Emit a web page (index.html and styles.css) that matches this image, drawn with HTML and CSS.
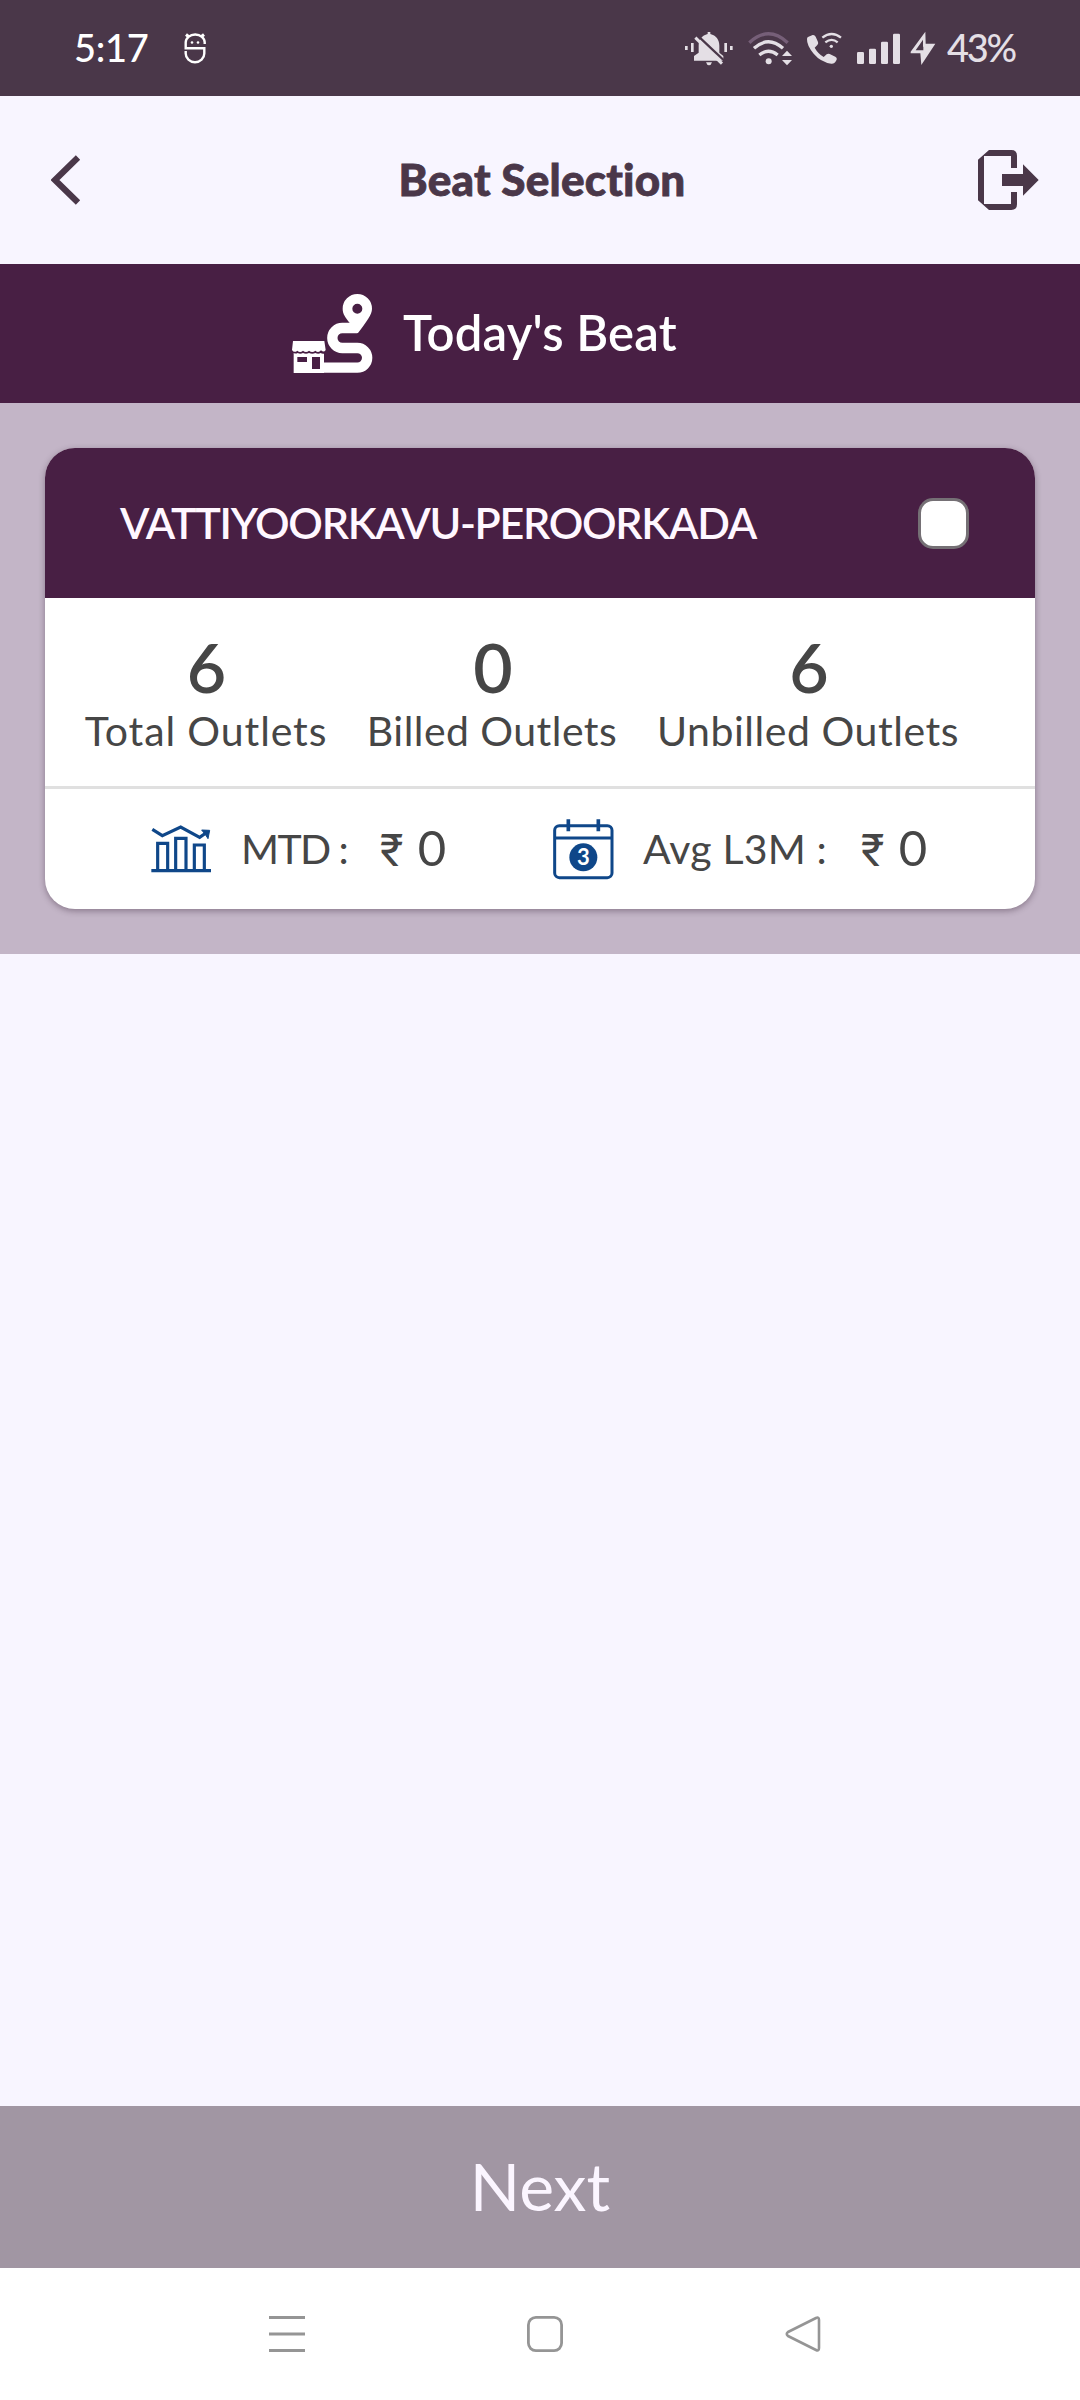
FILE: index.html
```html
<!DOCTYPE html>
<html lang="en">
<head>
<meta charset="utf-8">
<title>Beat Selection</title>
<link rel="stylesheet" href="styles.css">
</head>
<body>
<div class="screen">
  <div class="status">
    <span class="clock">5:17</span>
    <svg class="face" viewBox="0 0 22 32" width="22" height="32" fill="none" stroke="#fff" stroke-width="2.4">
      <path d="M20.7 12V10.500A9.500 8 0 0 0 1.700 10.500V16.200H20.300V21.500A9.300 8.800 0 0 1 1.700 21.500V19"/>
      <path d="M2 2.500L5 5M20 2.500L17 5" stroke-width="3"/>
      <circle cx="8" cy="10.500" r="1.300" fill="#fff" stroke="none"/><circle cx="14" cy="10.500" r="1.300" fill="#fff" stroke="none"/>
    </svg>
    <div class="tray">
      <svg class="bell" viewBox="75 90 150 105" width="50" height="35" fill="#e4dfe5">
        <path d="M78 135h8v12h-8zM96 126h8v27h-8zM196 126h8v27h-8zM213 135h8v12h-8z"/>
        <path d="M146 99V93h8v6C171 103 181 116 181 134v21l12 10v14H105v-14l14-10v-21C119 116 129 103 146 99zM141 184h18q-3 9-9 9t-9-9z"/>
        <path d="M112 100L200 183" stroke="#4a3749" stroke-width="7"/>
        <path d="M102 104L118 119" stroke="#4a3749" stroke-width="18"/>
        <path d="M109 110L189 188" stroke="#e4dfe5" stroke-width="9"/>
      </svg>
      <svg class="wifi" viewBox="264 90 135 105" width="45" height="35" fill="none" stroke="#e4dfe5" stroke-width="10">
        <path d="M268 125Q325 72 383 125" stroke="#765f78"/>
        <path d="M282 142Q325 103 369 142M298 162Q325 140 353 162"/>
        <circle cx="326" cy="181" r="9" fill="#e4dfe5" stroke="none"/>
        <path d="M366 165L381 149L396 165zM366 177L381 193L396 177z" fill="#e4dfe5" stroke="none"/>
      </svg>
      <svg class="call" viewBox="438 90 108 105" width="36" height="35" fill="none" stroke="#e4dfe5" stroke-width="7">
        <path d="M444 108L458 102Q464 101 467 107L474 123Q476 128 472 132L464 140Q474 158 491 168L500 160Q504 157 509 159L526 167Q532 170 530 176L526 183Q522 189 514 188Q482 183 461 158Q440 133 441 114Q441 110 444 108z" fill="#e4dfe5" stroke="none"/>
        <path d="M487 110Q515 88 543 110M496 124Q515 109 533 124"/>
        <circle cx="514" cy="136" r="5" fill="#e4dfe5" stroke="none"/>
      </svg>
      <svg class="signal" viewBox="588 90 135 105" width="45" height="35" fill="#e4dfe5">
        <rect x="591" y="153" width="21" height="36" rx="4"/><rect x="627" y="143" width="21" height="46" rx="4"/><rect x="663" y="122" width="21" height="67" rx="4"/><rect x="699" y="98" width="21" height="91" rx="4"/>
      </svg>
      <svg class="bolt" viewBox="750 90 78 105" width="26" height="35">
        <path fill="#e4dfe5" fill-rule="evenodd" d="M796 92L797 128H826L784 192L781 157H752V152zM789 116L767 148H790V137H789z"/>
      </svg>
      <span class="battery">43%</span>
    </div>
  </div>

  <header class="appbar">
    <svg class="back" viewBox="0 0 30 50" width="30" height="50"><path d="M27 2.500L4 25L27 47.500" fill="none" stroke="#4a3749" stroke-width="6.200"/></svg>
    <h1 class="title">Beat Selection</h1>
    <svg class="logout" viewBox="954 450 183 180" width="61" height="60">
      <path fill="#4a3749" fill-rule="evenodd" d="M987 450H1054Q1071 450 1071 467V504H1053V468H972V612H1053V576H1071V613Q1071 630 1054 630H987L954 601V479z"/>
      <path fill="#4a3749" d="M1026 522H1089V493L1136 540L1089 587V558H1026z"/>
    </svg>
  </header>

  <div class="banner">
    <svg class="route" viewBox="63 99 246 243" width="82" height="81">
      <path d="M155 323H262A29.500 29.500 0 0 0 262 264H217A30 30 0 0 1 217 204H262" fill="none" stroke="#fff" stroke-width="31"/>
      <path fill="#fff" fill-rule="evenodd" d="M262 102A44 44 0 0 1 306 146C306 164 290 184 264 219H240V190C226 172 218 162 218 146A44 44 0 0 1 262 102zM262 131A15 15 0 0 0 262 161A15 15 0 0 0 262 131z"/>
      <path fill="#fff" d="M69 243H163L167 270Q162 279 153 271Q145 280 136 272Q127 280 117 272Q108 280 99 272Q90 280 82 272Q72 280 66 270z"/>
      <path fill="#fff" fill-rule="evenodd" d="M71 279Q78 282 83 279Q91 284 99 279Q108 284 117 279Q127 284 136 279Q145 284 152 279Q156 282 162 281V339H71zM82 291V306H111V291zM126 291V327H150V291z"/>
    </svg>
    <span class="banner-text">Today's Beat</span>
  </div>

  <main class="list">
    <section class="card">
      <div class="card-head">
        <span class="beat-name">VATTIYOORKAVU-PEROORKADA</span>
        <span class="checkbox"></span>
      </div>
      <div class="stats">
        <div class="stat"><span class="num">6</span><span class="label l-total">Total Outlets</span></div>
        <div class="stat"><span class="num">0</span><span class="label l-billed">Billed Outlets</span></div>
        <div class="stat"><span class="num">6</span><span class="label l-unbilled">Unbilled Outlets</span></div>
      </div>
      <div class="sales">
        <svg class="chart" viewBox="63 75 180 144" width="60" height="48" fill="none" stroke="#0f4789" stroke-width="9.500">
          <path d="M64 212H243M83 211V130H113V211M137 211V115H168V211M193 211V135H223V211"/>
          <path d="M67 88L97 107L152 81L209 112L232 96"/>
          <path d="M215 90L239 91L234 116L227 105z" fill="#0f4789" stroke-width="3"/>
        </svg>
        <span class="key mtd">MTD :</span>
        <span class="value"><span class="rupee">₹</span> 0</span>
        <svg class="calendar" viewBox="68 56 183 183" width="61" height="61" fill="none" stroke="#0f4789" stroke-width="9">
          <rect x="73" y="76" width="172" height="156" rx="14"/>
          <path d="M73 113H245"/>
          <path d="M114 57V93M204 57V93" stroke-width="11"/>
          <circle cx="159" cy="171" r="42" fill="#0f4789" stroke="none"/>
          <text x="159" y="195" class="cal-num">3</text>
        </svg>
        <span class="key avg">Avg L3M :</span>
        <span class="value"><span class="rupee">₹</span> 0</span>
      </div>
    </section>
  </main>

  <div class="space"></div>
  <div class="next">Next</div>
  <nav class="nav">
    <svg width="36" height="38" viewBox="0 0 36 38" fill="none" stroke="#959595" stroke-width="3"><path d="M0 2.500H36M0 19H36M0 35.500H36"/></svg>
    <svg width="36" height="38" viewBox="0 0 36 38" fill="none" stroke="#959595" stroke-width="2.800"><rect x="1.400" y="2.400" width="33.200" height="33.200" rx="7.500"/></svg>
    <svg width="36" height="38" viewBox="0 0 36 38" fill="none" stroke="#959595" stroke-width="2.600" stroke-linejoin="round"><path d="M31 3Q34 1.500 34 5V33Q34 36.500 31 35L3 21Q0.500 19 3 17z"/></svg>
  </nav>
</div>
</body>
</html>
```
FILE: styles.css
```css
* { box-sizing: border-box; }
body { margin: 0; font-family: Lato, "Liberation Sans", sans-serif; font-variant-ligatures: none; }
svg { display: block; flex: none; }
.screen { width: 1080px; height: 2400px; display: flex; flex-direction: column; background: #f8f5ff; overflow: hidden; }
.screen span, .title { white-space: nowrap; }

.status { height: 96px; background: #4a3749; display: flex; align-items: center; padding: 0 66px 0 74px; color: #fff; flex: none; }
.clock { width: 110px; padding-bottom: 2px; font-size: 38px; font-weight: 500; letter-spacing: -0.3px; }
.tray { margin-left: auto; display: flex; align-items: center; color: #e4dfe5; }
.bell { margin-right: 1px; }
.wifi { margin-left: 13px; }
.call { margin-left: 13px; }
.signal { margin-left: 14px; }
.bolt { margin-left: 9px; }
.battery { width: 67px; margin-left: 11px; padding-bottom: 2px; font-size: 38px; font-weight: 500; letter-spacing: -2.3px; }

.appbar { height: 168px; display: flex; align-items: center; padding: 0 41px 0 51px; flex: none; }
.title { flex: 1; margin: 0; padding: 0 0 3px 25px; text-align: center; font-size: 44px; font-weight: 900; color: #4a3749; letter-spacing: 0.2px; -webkit-text-stroke: 0.8px #4a3749; }

.banner { height: 139px; background: #481f44; display: flex; align-items: center; padding-left: 291px; gap: 30px; color: #fff; flex: none; }
.banner-text { padding-bottom: 3px; font-size: 49px; font-weight: 600; letter-spacing: 0.200px; }

.list { height: 551px; background: #c3b5c7; padding: 45px; flex: none; }
.card { height: 461px; border-radius: 30px; background: #fff; overflow: hidden; box-shadow: 0 2px 6px rgba(50, 30, 50, .4); }
.card-head { height: 150px; background: #481f44; display: flex; align-items: center; justify-content: space-between; padding: 0 66px 0 75px; color: #fff7ff; }
.beat-name { padding-bottom: 2px; font-size: 43px; font-weight: 600; letter-spacing: -1.300px; }
.checkbox { width: 51px; height: 51px; border: 3px solid #757075; border-radius: 15px; background: #fff; }

.stats { height: 191px; border-bottom: 3px solid #e0e0e0; display: grid; grid-template-columns: 241px 248px 300px; column-gap: 42px; padding: 29px 0 0 40px; color: #464646; }
.stat { display: flex; flex-direction: column; align-items: center; }
.num { font-size: 68px; font-weight: 600; line-height: 80px; padding-left: 2px; }
.label { font-size: 41px; line-height: 48px; }
.l-total { padding-left: 1px; letter-spacing: 0.900px; }
.l-billed { letter-spacing: 0.450px; }
.l-unbilled { letter-spacing: 0.550px; }

.sales { height: 120px; display: flex; align-items: center; padding-left: 106px; color: #464646; }
.key { padding-bottom: 2px; font-size: 41px; }
.chart { margin-right: 30px; }
.mtd { width: 139px; letter-spacing: -1.600px; }
.avg { width: 218px; letter-spacing: 0.2px; }
.value { width: 173px; padding-bottom: 3px; font-size: 49px; word-spacing: 2px; }
.rupee { font-family: Roboto, sans-serif; font-size: 45px; }
.calendar { margin-right: 29px; }
.cal-num { fill: #fff; stroke: none; font-size: 66px; font-weight: 700; text-anchor: middle; }

.space { flex: 1; }
.next { height: 162px; padding-bottom: 4px; background: #a196a3; color: #fbf5ff; font-size: 66px; display: flex; align-items: center; justify-content: center; flex: none; }
.nav { height: 132px; background: #fff; display: flex; align-items: center; justify-content: space-between; padding: 0 259px 0 269px; flex: none; }
```
